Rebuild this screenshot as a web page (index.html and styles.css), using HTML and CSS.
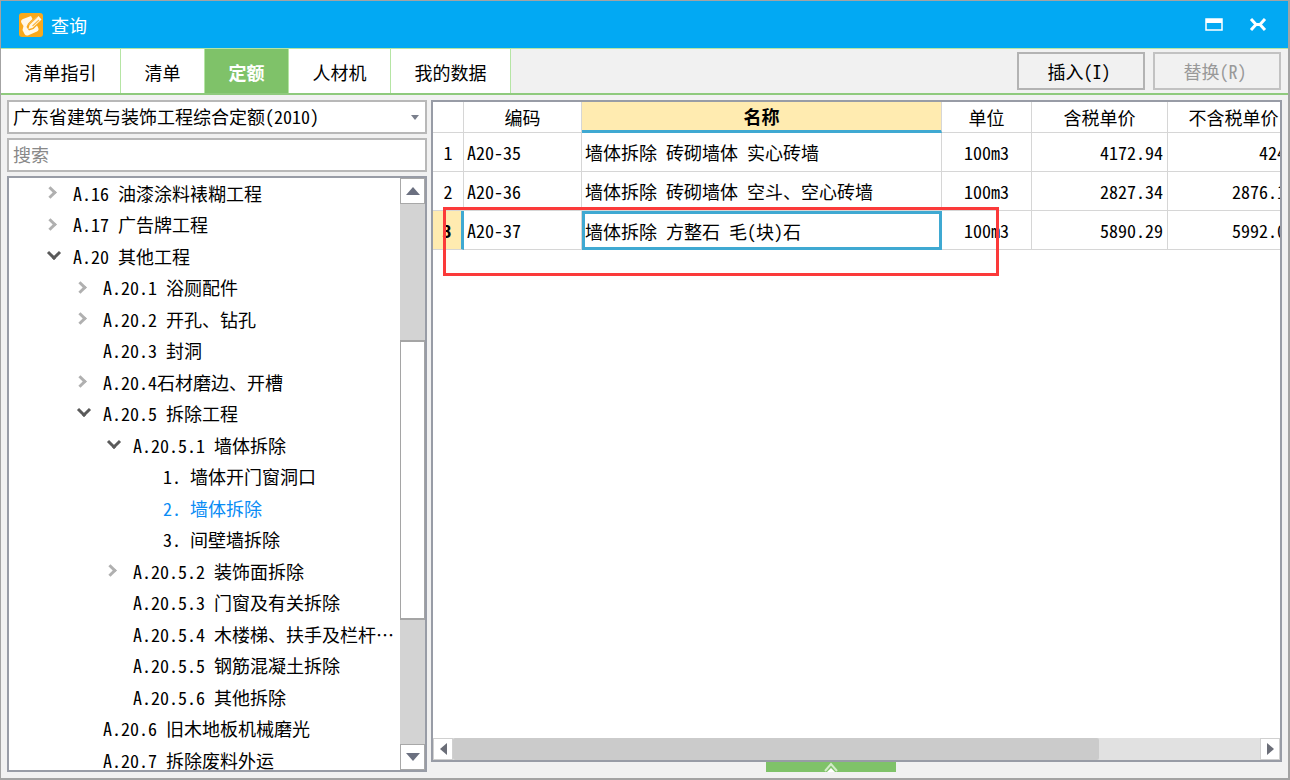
FILE: index.html
```html
<!DOCTYPE html>
<html lang="zh-CN">
<head>
<meta charset="utf-8">
<title>查询</title>
<link rel="stylesheet" href="styles.css">
</head>
<body>
<div class="window">
  <header class="titlebar">
    <svg class="logo" viewBox="0 0 24 24" aria-hidden="true">
      <rect width="24" height="24" rx="3" fill="#f9a91b"/>
      <path d="M12 3 L4 6 Q1 7.500 2.500 10 L4.500 13 L3.500 17 L5.500 21 Q7 23.500 10 22 L18 18.500 Q20.500 17 19 14.500 L18 12.500 L14.500 16 L10 17.500 L7.500 14 L9 10.500 L13.500 6Z" fill="#fff8e8"/>
      <path d="M19.500 3 L22.500 6.500 L13.500 15 L9.500 16 L10.500 12Z" fill="#fff8e8"/>
      <path d="M9.500 11.500 L18 4 M13.500 13 L20 7" stroke="#f9b94a" stroke-width="1.200"/>
    </svg>
    <h1>查询</h1>
    <div class="win-buttons">
      <button type="button" aria-label="最大化"><svg width="18" height="14" viewBox="0 0 18 14"><path d="M1 1h16v11H1z" fill="none" stroke="#fff" stroke-width="1.500"/><path d="M1 1h16v4H1z" fill="#fff"/></svg></button>
      <button type="button" aria-label="关闭"><svg width="18" height="14" viewBox="0 0 18 14"><path d="M2 1 L7 6.500 L2 12 M16 1 L11 6.500 L16 12 M6 6.500H12" fill="none" stroke="#fff" stroke-width="3"/></svg></button>
    </div>
  </header>

  <nav class="toolbar">
    <div class="tabs" role="tablist">
      <button type="button" role="tab" class="tab tab-xl">清单指引</button>
      <button type="button" role="tab" class="tab">清单</button>
      <button type="button" role="tab" class="tab active" aria-selected="true">定额</button>
      <button type="button" role="tab" class="tab tab-l">人材机</button>
      <button type="button" role="tab" class="tab tab-xl">我的数据</button>
    </div>
    <div class="actions">
      <button type="button" class="action">插入(I)</button>
      <button type="button" class="action" disabled>替换(R)</button>
    </div>
  </nav>

  <main class="content">
    <aside class="side">
      <div class="select-wrap">
        <select class="field" aria-label="定额库"><option>广东省建筑与装饰工程综合定额(2010)</option></select>
        <svg class="caret" width="8" height="5" viewBox="0 0 8 5" aria-hidden="true"><path d="M0 0h8L4 5z" fill="#7a7f8c"/></svg>
      </div>
      <input class="field" type="text" placeholder="搜索" aria-label="搜索">
      <div class="tree-box">
        <ul class="tree" role="tree">
          <li class="l1 closed" role="treeitem">A.16 油漆涂料裱糊工程</li>
          <li class="l1 closed" role="treeitem">A.17 广告牌工程</li>
          <li class="l1 open" role="treeitem">A.20 其他工程</li>
          <li class="l2 closed" role="treeitem">A.20.1 浴厕配件</li>
          <li class="l2 closed" role="treeitem">A.20.2 开孔、钻孔</li>
          <li class="l2" role="treeitem">A.20.3 封洞</li>
          <li class="l2 closed" role="treeitem">A.20.4石材磨边、开槽</li>
          <li class="l2 open" role="treeitem">A.20.5 拆除工程</li>
          <li class="l3 open" role="treeitem">A.20.5.1 墙体拆除</li>
          <li class="l4" role="treeitem">1. 墙体开门窗洞口</li>
          <li class="l4 current" role="treeitem" aria-selected="true">2. 墙体拆除</li>
          <li class="l4" role="treeitem">3. 间壁墙拆除</li>
          <li class="l3 closed" role="treeitem">A.20.5.2 装饰面拆除</li>
          <li class="l3" role="treeitem">A.20.5.3 门窗及有关拆除</li>
          <li class="l3" role="treeitem">A.20.5.4 木楼梯、扶手及栏杆…</li>
          <li class="l3" role="treeitem">A.20.5.5 钢筋混凝土拆除</li>
          <li class="l3" role="treeitem">A.20.5.6 其他拆除</li>
          <li class="l2" role="treeitem">A.20.6 旧木地板机械磨光</li>
          <li class="l2" role="treeitem">A.20.7 拆除废料外运</li>
        </ul>
        <div class="vscroll">
          <button type="button" aria-label="向上滚动"><svg width="14" height="8" viewBox="0 0 14 8"><path d="M0 8h14L7 0z" fill="#6b7080"/></svg></button>
          <div class="vtrack"><div class="vthumb"></div></div>
          <button type="button" aria-label="向下滚动"><svg width="14" height="8" viewBox="0 0 14 8"><path d="M0 0h14L7 8z" fill="#6b7080"/></svg></button>
        </div>
      </div>
    </aside>

    <section class="result">
      <div class="grid-box">
        <div class="grid-view">
          <table>
            <colgroup><col class="c-no"><col class="c-code"><col><col class="c-unit"><col class="c-price"><col class="c-net"></colgroup>
            <thead>
              <tr><th></th><th>编码</th><th class="sorted">名称</th><th>单位</th><th>含税单价</th><th>不含税单价</th></tr>
            </thead>
            <tbody>
              <tr><td class="no">1</td><td>A20-35</td><td>墙体拆除 砖砌墙体 实心砖墙</td><td class="unit">100m3</td><td class="num">4172.94</td><td class="num">4244</td></tr>
              <tr><td class="no">2</td><td>A20-36</td><td>墙体拆除 砖砌墙体 空斗、空心砖墙</td><td class="unit">100m3</td><td class="num">2827.34</td><td class="num cut">2876.1</td></tr>
              <tr><td class="no picked">3</td><td>A20-37</td><td class="focus">墙体拆除 方整石 毛(块)石</td><td class="unit">100m3</td><td class="num">5890.29</td><td class="num cut">5992.0</td></tr>
            </tbody>
          </table>
        </div>
        <div class="hscroll">
          <button type="button" aria-label="向左滚动"><svg width="7" height="12" viewBox="0 0 7 12"><path d="M7 0v12L0 6z" fill="#6b6e78"/></svg></button>
          <div class="htrack"><div class="hthumb"></div></div>
          <button type="button" aria-label="向右滚动"><svg width="7" height="12" viewBox="0 0 7 12"><path d="M0 0v12l7-6z" fill="#6b6e78"/></svg></button>
        </div>
        <div class="mark"></div>
      </div>
      <button type="button" class="expander" aria-label="展开"><svg width="16" height="10" viewBox="0 0 16 10"><path d="M2 9 L8 2 L14 9" fill="none" stroke="#d3ebc9" stroke-width="2"/><path d="M4 10 L8 6 L12 10z" fill="#fff"/></svg></button>
    </section>
  </main>
</div>
</body>
</html>
```

FILE: styles.css
```css
*, *::before { box-sizing: border-box; }

body {
  margin: 0;
  color: #000;
  font: 18px/24px "Noto Sans CJK SC", sans-serif;
  font-feature-settings: "hwid" 1;
}

button, input, select {
  margin: 0;
  padding: 0;
  border: 0;
  border-radius: 0;
  background: none;
  color: inherit;
  font: inherit;
  font-feature-settings: inherit;
}

svg { display: block; }

.window {
  display: flex;
  flex-direction: column;
  height: 100vh;
  border: 2px solid #a3a3a3;
  border-top-width: 1px;
  border-left-width: 1px;
  background: #f1f1f1;
  overflow: hidden;
}

/* Title bar */
.titlebar {
  display: flex;
  align-items: center;
  flex: none;
  height: 47px;
  padding: 0 21px 0 18px;
  background: #02a9f3;
  color: #fff;
}
.logo { width: 24px; height: 24px; }
.titlebar h1 { margin: 0 0 0 8px; font-size: 18px; font-weight: 400; }
.win-buttons { display: flex; gap: 26px; margin-left: auto; }

/* Tabs and actions */
.toolbar {
  display: flex;
  justify-content: space-between;
  flex: none;
  height: 47px;
  border-top: 1px solid #b5e5a4;
  border-bottom: 2px solid #8fca7d;
}
.tabs { display: flex; }
.tab {
  width: 84px;
  border-right: 1px solid #b5e5a4;
  background: #fff;
  padding-top: 2px;
}
.tab-l { width: 102px; }
.tab-xl { width: 120px; }
.tab.active { background: #7fc269; color: #fff; font-weight: 700; }
.actions { display: flex; gap: 8px; padding: 3px 7px 3px 0; }
.action {
  width: 128px;
  height: 38px;
  padding-right: 4px;
  border: 2px solid #b3b3b3;
}
.action:disabled { border-color: #c2c2c2; color: #999; }

/* Body */
.content {
  display: flex;
  flex: 1;
  gap: 4px;
  min-height: 0;
  padding: 5px 6px 6px;
}
.side {
  display: flex;
  flex-direction: column;
  flex: none;
  gap: 4px;
  width: 420px;
}
.select-wrap { display: grid; align-items: center; }
.select-wrap > * { grid-area: 1 / 1; }
.caret { justify-self: end; margin-right: 8px; pointer-events: none; }
.field {
  width: 100%;
  height: 34px;
  padding: 0 4px 2px;
  border: 2px solid #b8b8b8;
  background: #fff;
  appearance: none;
}
.field::placeholder { color: #888; opacity: 1; }

.tree-box {
  display: flex;
  flex: 1;
  min-height: 0;
  border: 2px solid #989ca6;
  background: #fff;
}
.tree {
  display: grid;
  grid-auto-rows: 31px 32px;
  flex: 1;
  margin: 0;
  padding: 0;
  list-style: none;
  overflow: hidden;
  white-space: nowrap;
}
.tree li { display: flex; align-items: center; padding-bottom: 2px; }
.tree li::before { content: ""; flex: none; width: 9px; height: 9px; margin-right: 18px; }
.l1 { padding-left: 37px; }
.l2 { padding-left: 67px; }
.l3 { padding-left: 97px; }
.l4 { padding-left: 127px; }
.tree .closed::before {
  border: solid #b0b0b0;
  border-width: 3px 3px 0 0;
  transform: rotate(45deg);
}
.tree .open::before {
  width: 10px;
  height: 10px;
  margin: 0 14px 6px 3px;
  border: solid #5a5a5a;
  border-width: 0 3px 3px 0;
  transform: rotate(45deg);
}
.tree .current { color: #0a8cf5; }

.vscroll { display: flex; flex-direction: column; flex: none; width: 25px; background: #d3d3d3; }
.vscroll button {
  display: grid;
  place-items: center;
  height: 26px;
  border: 1px solid #a8a8a8;
  background: #fff;
}
.vtrack { display: flex; flex-direction: column; flex: 1; }
.vtrack::before { content: ""; flex: 138; }
.vtrack::after { content: ""; flex: 125; }
.vthumb { flex: 279; border: solid #a5a5a5; border-width: 2px 1px; background: #fff; }

.result { display: flex; flex-direction: column; flex: 1; min-width: 0; }
.grid-box {
  position: relative;
  display: flex;
  flex-direction: column;
  flex: 1;
  min-height: 0;
  border: 2px solid #989ca6;
  background: #fff;
}
.grid-view { flex: 1; min-height: 0; overflow: hidden; }

table {
  width: 100%;
  min-width: 867px;
  border-collapse: separate;
  border-spacing: 0;
  table-layout: fixed;
}
.c-no { width: 31px; }
.c-code { width: 118px; }
.c-unit { width: 90px; }
.c-price { width: 136px; }
.c-net { width: 132px; }
th, td {
  padding: 0 3px;
  border: solid #d6d6d6;
  border-width: 0 1px 1px 0;
  white-space: nowrap;
}
th { height: 31px; font-weight: 400; }
td { height: 39px; }
.sorted { border-bottom: 3px solid #3fa9d2; background: #ffebb0; font-weight: 700; }
.no, .unit { text-align: center; }
.num { padding-right: 4px; text-align: right; }
.cut { padding-right: 13px; }
.picked { border-right: 3px solid #3fa9d2; background: #ffebb0; font-weight: 700; }
.focus { padding: 0; border: 3px solid #3fa9d2; }

.hscroll { display: flex; flex: none; height: 22px; background: #e1e1e1; }
.hscroll button {
  display: grid;
  place-items: center;
  width: 20px;
  border: 1px solid #d0d0d0;
  background: #fff;
}
.htrack { flex: 1; }
.hthumb { width: 80%; height: 100%; border-radius: 2px; background: #cbcbcb; }

/* Highlight frame laid over the selected row */
.mark {
  position: absolute;
  top: 105px;
  left: 10px;
  width: 556px;
  height: 69px;
  border: 3px solid #fb3a3a;
}

.expander {
  display: grid;
  place-items: center;
  align-self: center;
  width: 130px;
  height: 10px;
  margin-right: 52px;
  background: #7fc269;
}
```
